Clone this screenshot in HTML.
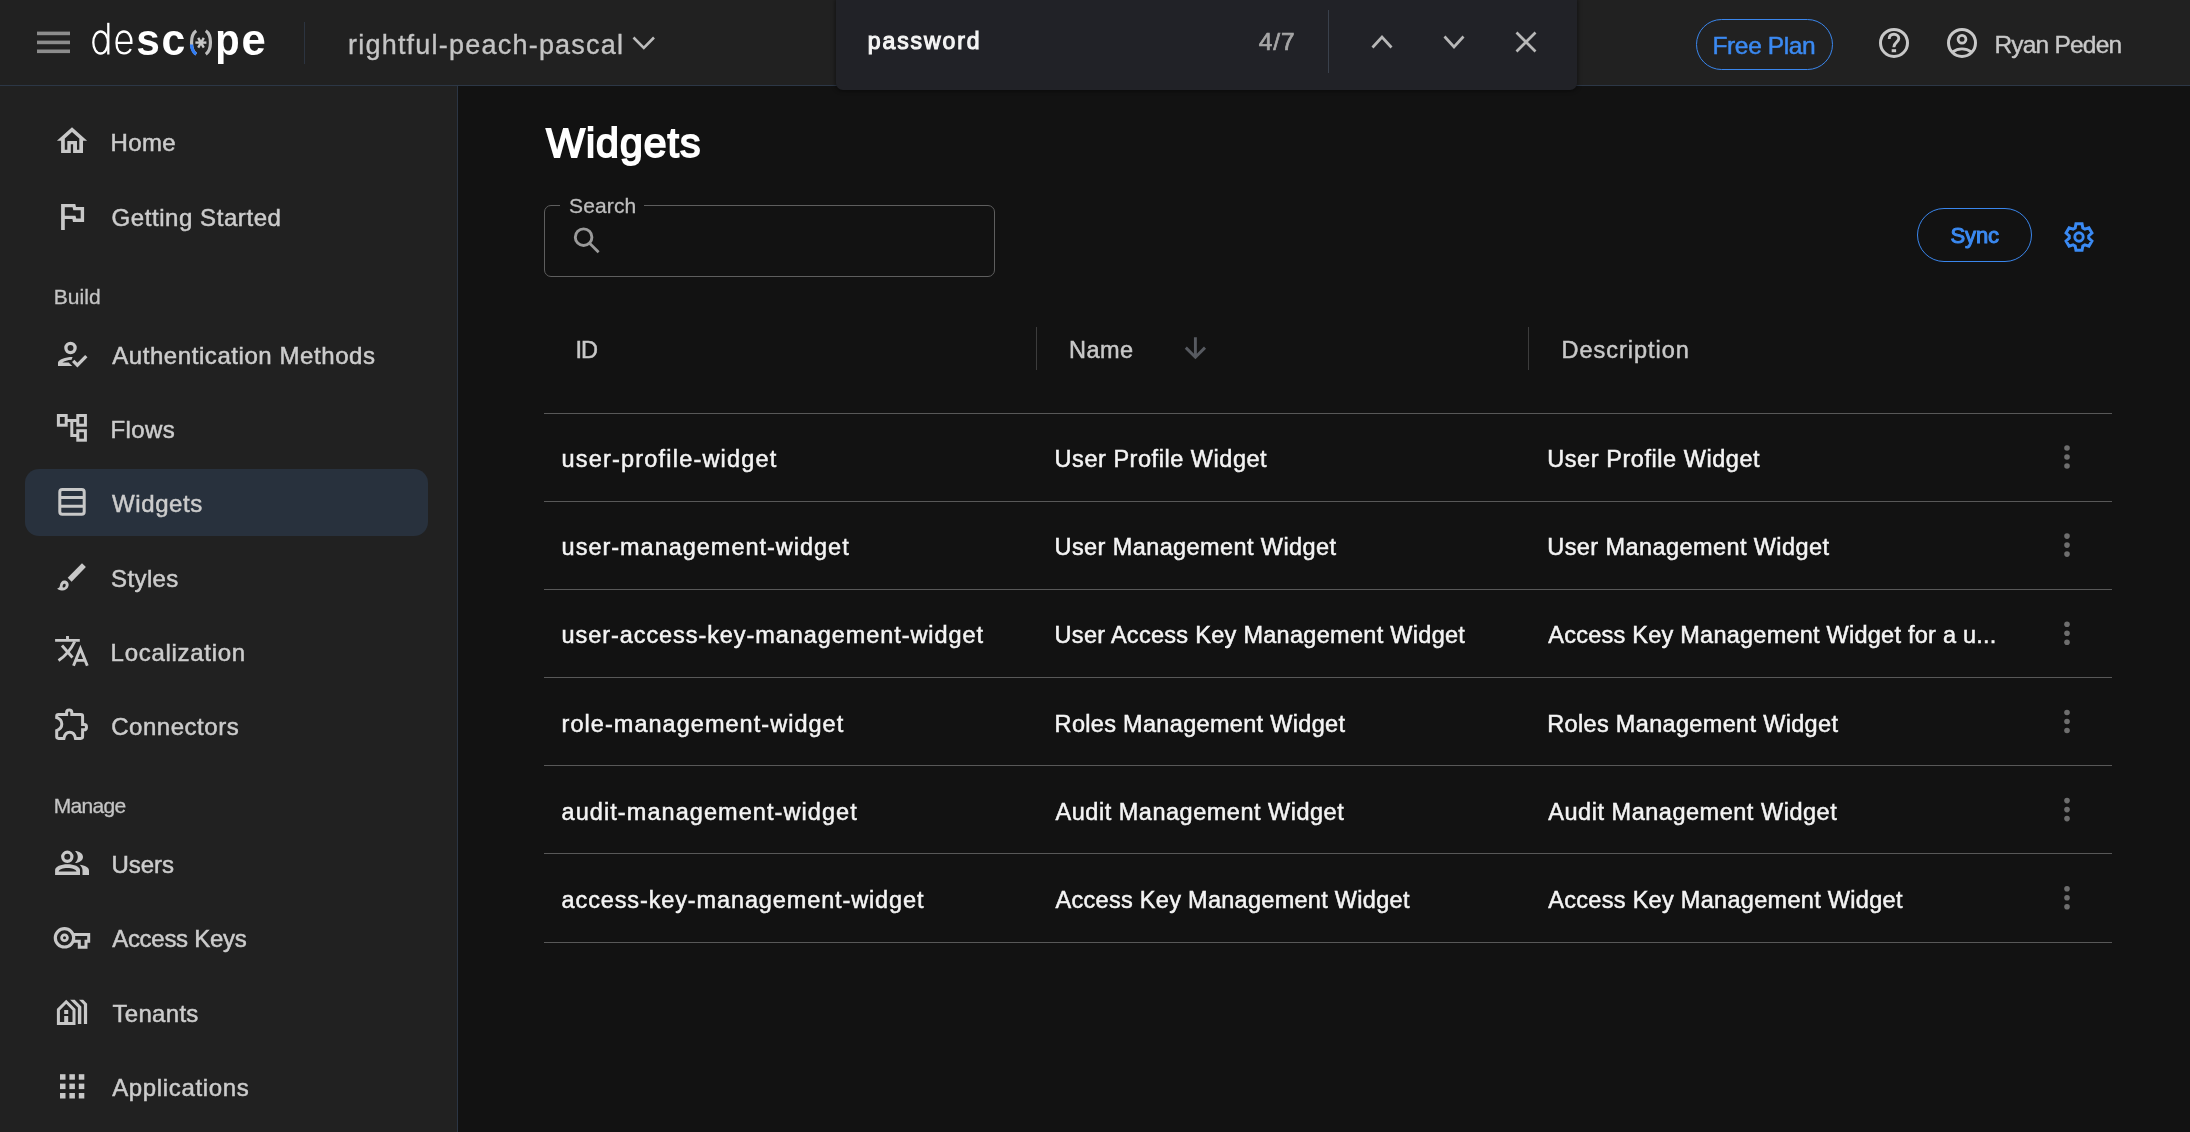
<!DOCTYPE html>
<html><head><meta charset="utf-8"><title>Widgets</title>
<style>
*{box-sizing:border-box;margin:0;padding:0}
html,body{width:2190px;height:1132px;overflow:hidden;background:#121212;font-family:"Liberation Sans",sans-serif}
.abs{position:absolute}
.t{position:absolute;white-space:nowrap;font-family:"Liberation Sans",sans-serif}
#root{position:absolute;left:0;top:0;width:2190px;height:1132px;will-change:transform}
svg{position:absolute;left:0;top:0;overflow:visible}
</style></head><body><div id="root">

<div class="abs" style="left:0;top:0;width:2190px;height:85px;background:#212121"></div>
<div class="abs" style="left:0;top:85px;width:2190px;height:1px;background:#2c3746"></div>
<div class="abs" style="left:0;top:86px;width:457px;height:1046px;background:#212121"></div>
<div class="abs" style="left:457px;top:86px;width:1px;height:1046px;background:#2b3544"></div>
<div class="abs" style="left:25px;top:469px;width:403px;height:67px;background:#28313d;border-radius:14px"></div>
<div class="abs" style="left:304px;top:22px;width:1px;height:42px;background:#2c3440"></div>
<div class="abs" style="left:836px;top:0;width:741px;height:90px;background:#212227;border-radius:0 0 7px 7px;box-shadow:0 0 4px 1px rgba(0,0,0,0.45)"></div>
<div class="abs" style="left:1328px;top:10px;width:1px;height:63px;background:#3a414c"></div>
<div class="abs" style="left:1696px;top:19px;width:137px;height:51px;border:1.5px solid #3a86ec;border-radius:26px"></div>
<div class="abs" style="left:544px;top:205px;width:451px;height:72px;border:1.5px solid #5e5e5e;border-radius:7px"></div>
<div class="abs" style="left:560px;top:200px;width:84px;height:10px;background:#121212"></div>
<div class="abs" style="left:1917px;top:208px;width:115px;height:54px;border:1.5px solid #3a86ec;border-radius:27px"></div>
<div class="abs" style="left:1036px;top:327px;width:1px;height:43px;background:#3c3c3c"></div>
<div class="abs" style="left:1528px;top:327px;width:1px;height:43px;background:#3c3c3c"></div>
<div class="abs" style="left:544px;top:413px;width:1568px;height:1px;background:#585858"></div>
<div class="abs" style="left:544px;top:501px;width:1568px;height:1px;background:#585858"></div>
<div class="abs" style="left:544px;top:589px;width:1568px;height:1px;background:#585858"></div>
<div class="abs" style="left:544px;top:677px;width:1568px;height:1px;background:#585858"></div>
<div class="abs" style="left:544px;top:765px;width:1568px;height:1px;background:#585858"></div>
<div class="abs" style="left:544px;top:853px;width:1568px;height:1px;background:#585858"></div>
<div class="abs" style="left:544px;top:942px;width:1568px;height:1px;background:#585858"></div>
<svg width="2190" height="1132" viewBox="0 0 2190 1132">
<rect x="37" y="31.6" width="33" height="3.6" fill="#8c8c8c"/>
<rect x="37" y="40.6" width="33" height="3.6" fill="#8c8c8c"/>
<rect x="37" y="49.5" width="33" height="3.6" fill="#8c8c8c"/>
<g fill="none" stroke="#ffffff" stroke-width="2.3">
<ellipse cx="100.6" cy="42.5" rx="7.3" ry="11"/>
<line x1="108.3" y1="22.8" x2="108.3" y2="54.5"/>
<path d="M116.5,42.8 H131.4 C131.6,35 127.6,31.5 123.9,31.5 C119.3,31.5 116.5,36 116.5,42.8 C116.5,49.5 119.5,53.4 124,53.4 C127.3,53.4 129.5,51.6 130.8,49"/>
</g>
<g font-family="Liberation Sans" font-weight="700" font-size="44" fill="#ffffff">
<text x="136.2" y="54.5" textLength="23.6" lengthAdjust="spacingAndGlyphs">s</text>
<text x="161.6" y="54.5" textLength="23.8" lengthAdjust="spacingAndGlyphs">c</text>
<text x="215.3" y="54.5" textLength="24.4" lengthAdjust="spacingAndGlyphs">p</text>
<text x="241.5" y="54.5" textLength="24.3" lengthAdjust="spacingAndGlyphs">e</text>
</g>
<path d="M196.2,30.8 C190,35 190,50 196.2,54.2" fill="none" stroke="#bdbdbd" stroke-width="3.2"/>
<path d="M191.4,44.5 C191.7,49.5 193.6,52.5 196.2,54.2" fill="none" stroke="#2f7cf6" stroke-width="3.2"/>
<path d="M205.8,30.8 C212,35 212,50 205.8,54.2" fill="none" stroke="#bdbdbd" stroke-width="3.2"/>
<g stroke="#c8c8c8" stroke-width="2.4"><line x1="195.4" y1="42.6" x2="206.4" y2="42.6"/><line x1="198.2" y1="37.8" x2="203.8" y2="47.6"/><line x1="203.8" y1="37.8" x2="198.2" y2="47.6"/></g>
<path d="M633.5,37.5 L643.8,47.8 L654,37.5" fill="none" stroke="#bdbdbd" stroke-width="2.6"/>
<path d="M1372.5,47.5 L1382,37 L1391.5,47.5" fill="none" stroke="#b8b8b8" stroke-width="2.7"/>
<path d="M1444.5,36.5 L1454,47 L1463.5,36.5" fill="none" stroke="#b8b8b8" stroke-width="2.7"/>
<path d="M1516.5,32.5 L1535.5,51.5 M1535.5,32.5 L1516.5,51.5" fill="none" stroke="#b8b8b8" stroke-width="2.7"/>
<circle cx="1894" cy="42.9" r="13.5" fill="none" stroke="#c8c8c8" stroke-width="3"/>
<path d="M1889.2,39 C1889.2,35.5 1891.5,34.3 1894,34.3 C1896.8,34.3 1898.8,36 1898.8,38.6 C1898.8,42 1893.8,42.5 1893.8,47.3" fill="none" stroke="#c8c8c8" stroke-width="2.9"/>
<rect x="1891.7" y="49.2" width="4.4" height="3" fill="#c8c8c8"/>
<circle cx="1962" cy="42.9" r="13.5" fill="none" stroke="#c8c8c8" stroke-width="3"/>
<circle cx="1962" cy="39.2" r="3.9" fill="none" stroke="#c8c8c8" stroke-width="2.8"/>
<path d="M1952.5,52 C1955.5,49.8 1958.5,48.8 1962,48.8 C1965.5,48.8 1968.5,49.8 1971.5,52" fill="none" stroke="#c8c8c8" stroke-width="2.8"/>
<g fill="#c8c8c8" fill-rule="evenodd">
<path d="M72,127.2 L87.1,140.8 L83,140.8 L83,153 L73.1,153 L73.1,144.2 L70.8,144.2 L70.8,153 L61.1,153 L61.1,140.8 L56.9,140.8 Z M72,132 L79.3,138.6 L79.3,149.7 L77,149.7 L77,141 L67.3,141 L67.3,149.7 L64.8,149.7 L64.8,138.6 Z"/>
<path d="M61.1,203.9 L75.3,203.9 L76,206.9 L84.1,206.9 L84.1,222.1 L73,222.1 L72.4,219.1 L64.8,219.1 L64.8,229.9 L61.1,229.9 Z M64.8,207.2 L72.6,207.2 L73.3,210.2 L80.7,210.2 L80.7,218.5 L76.2,218.5 L75.5,215.7 L64.8,215.7 Z"/>
</g>
<circle cx="70.5" cy="348" r="4.6" fill="none" stroke="#c8c8c8" stroke-width="3.3"/>
<path d="M58,366 L72.3,366 L68.6,362.5 L62.3,362.5 C64.5,361 67.5,360 71.6,359.7 L72.6,357 C65,357 58.4,359.5 58,362.6 Z" fill="#c8c8c8"/>
<path d="M73.2,360.8 L77.4,365.2 L86.3,356.2" fill="none" stroke="#c8c8c8" stroke-width="3.3"/>
<g fill="none" stroke="#c8c8c8" stroke-width="3">
<rect x="58.4" y="415.5" width="7.8" height="9.7"/>
<rect x="77.8" y="415.5" width="7.6" height="9.7"/>
<rect x="77.8" y="430.7" width="7.6" height="9.5"/>
<path d="M66.2,420.5 H77.8 M71.8,420.5 V435.4 H77.8"/>
</g>
<rect x="59.8" y="489.6" width="24.4" height="24.6" rx="2.5" fill="none" stroke="#c8c8c8" stroke-width="3"/>
<path d="M59.8,497.5 H84.2 M59.8,506.3 H84.2" stroke="#c8c8c8" stroke-width="3"/>
<path d="M67.7,577.8 L82,563.2 L85.9,567.1 L71.6,581.7 Z" fill="#c8c8c8"/>
<path d="M64.3,580.5 C67.5,580.5 69.2,583 68.5,586 C67.7,589.3 64.6,590.6 61.8,590.4 C59.5,590.2 57.8,589.3 57.2,588.4 C59.2,588 59.6,587.3 59.9,585.5 C60.3,582.5 62,580.5 64.3,580.5 Z M64.5,583.8 C63.3,583.8 62.6,585.2 62.6,586.4 C62.6,587.3 63.2,587.7 63.9,587.6 C65,587.5 65.7,586.2 65.7,585.1 C65.7,584.3 65.2,583.8 64.5,583.8 Z" fill="#c8c8c8" fill-rule="evenodd"/>
<g fill="none" stroke="#c8c8c8" stroke-width="2.9">
<path d="M55.1,640.4 H79.8 M67.5,636 V640.4"/>
<path d="M74.7,641.5 C71.5,648.5 66,655.5 58.5,660.5"/>
<path d="M62,645.5 L72.5,657.5"/>
<path d="M73.5,665.8 L80.4,648.6 L87.3,665.8 M76,660.4 H85"/>
</g>
<path d="M58.5,714.6 H66.6 V712.3 C66.6,709.2 71.8,709.2 71.8,712.3 V714.6 H80.8 C81.8,714.6 82.6,715.4 82.6,716.4 V724.5 H84.3 C87.2,724.5 87.2,729.8 84.3,729.8 H82.6 V736.6 C82.6,737.6 81.8,738.4 80.8,738.4 H75.5 C74.8,734.6 73.2,732.3 69.8,732.3 C66.4,732.3 64.6,734.6 63.9,738.4 H58.5 C57.5,738.4 56.7,737.6 56.7,736.6 V730.6 C60,729.3 61.8,727 61.8,724 C61.8,721 60,718.8 56.7,717.6 V716.4 C56.7,715.4 57.5,714.6 58.5,714.6 Z" fill="none" stroke="#c8c8c8" stroke-width="3"/>
<circle cx="67.3" cy="856.8" r="4.6" fill="none" stroke="#c8c8c8" stroke-width="3.2"/>
<path d="M75,851 C79,851 83,853.5 83,857 C83,860.5 79,863 75,863 C77,861 77.8,859 77.8,857 C77.8,855 77,853 75,851 Z" fill="#c8c8c8"/>
<path d="M55.1,875 V870 C55.1,866.5 61,864.2 67.5,864.2 C74,864.2 80,866.5 80,870 V875 Z M58.6,871.5 H76.5 C76,869.5 72,868 67.5,868 C63,868 59,869.5 58.6,871.5 Z" fill="#c8c8c8" fill-rule="evenodd"/>
<path d="M79.6,864.7 C85,865.2 89,867.3 89,870.5 V875 H82.5 V870.3 C82.5,868.3 81.5,866.3 79.6,864.7 Z" fill="#c8c8c8"/>
<circle cx="64.5" cy="937.8" r="9.2" fill="none" stroke="#c8c8c8" stroke-width="3.2"/>
<circle cx="64.5" cy="937.8" r="2.9" fill="none" stroke="#c8c8c8" stroke-width="2.8"/>
<path d="M73.5,934.6 H88.7 V941.3 H86 V947.2 H79.3 V941.3 H73.5" fill="none" stroke="#c8c8c8" stroke-width="3"/>
<path d="M82.6,941.3 V945" stroke="#212121" stroke-width="2"/>
<path d="M58.4,1023.6 V1009.6 L66.2,1001.8 L74,1009.6 V1023.6 Z" fill="none" stroke="#c8c8c8" stroke-width="3"/>
<rect x="64.2" y="1010" width="4" height="4" fill="#c8c8c8"/>
<rect x="64.2" y="1016" width="4" height="7" fill="#c8c8c8"/>
<path d="M70.1,999.8 L74.7,999.8 L81.3,1006.4 L81.3,1024.1 L77.9,1024.1 L77.9,1007.6 Z M79,999.8 L83.2,999.8 L87.1,1003.7 L87.1,1024.1 L83.9,1024.1 L83.9,1004.7 Z" fill="#c8c8c8"/>
<rect x="60.0" y="1074.2" width="5.5" height="5.5" fill="#c8c8c8"/>
<rect x="69.4" y="1074.2" width="5.5" height="5.5" fill="#c8c8c8"/>
<rect x="78.8" y="1074.2" width="5.5" height="5.5" fill="#c8c8c8"/>
<rect x="60.0" y="1083.6" width="5.5" height="5.5" fill="#c8c8c8"/>
<rect x="69.4" y="1083.6" width="5.5" height="5.5" fill="#c8c8c8"/>
<rect x="78.8" y="1083.6" width="5.5" height="5.5" fill="#c8c8c8"/>
<rect x="60.0" y="1093.0" width="5.5" height="5.5" fill="#c8c8c8"/>
<rect x="69.4" y="1093.0" width="5.5" height="5.5" fill="#c8c8c8"/>
<rect x="78.8" y="1093.0" width="5.5" height="5.5" fill="#c8c8c8"/>
<circle cx="583.6" cy="237.2" r="8.3" fill="none" stroke="#9a9a9a" stroke-width="2.9"/>
<path d="M589.8,243.4 L598.6,252.2" stroke="#9a9a9a" stroke-width="2.8"/>
<path d="M1195.4,337.3 V357 M1185.8,347.6 L1195.4,357.2 L1205,347.6" fill="none" stroke="#575a60" stroke-width="2.9"/>
<path d="M2082.83,227.98 L2082.04,223.85 L2075.96,223.85 L2075.17,227.98 L2073.10,229.17 L2069.13,227.79 L2066.09,233.05 L2069.27,235.81 L2069.27,238.19 L2066.09,240.95 L2069.13,246.21 L2073.10,244.83 L2075.17,246.02 L2075.96,250.15 L2082.04,250.15 L2082.83,246.02 L2084.90,244.83 L2088.87,246.21 L2091.91,240.95 L2088.73,238.19 L2088.73,235.81 L2091.91,233.05 L2088.87,227.79 L2084.90,229.17 Z" fill="none" stroke="#3a8af4" stroke-width="3" stroke-linejoin="miter"/>
<circle cx="2079" cy="237" r="4.2" fill="none" stroke="#3a8af4" stroke-width="2.9"/>
<circle cx="2067" cy="448.0" r="2.8" fill="#6e6e6e"/>
<circle cx="2067" cy="457.0" r="2.8" fill="#6e6e6e"/>
<circle cx="2067" cy="466.0" r="2.8" fill="#6e6e6e"/>
<circle cx="2067" cy="536.1" r="2.8" fill="#6e6e6e"/>
<circle cx="2067" cy="545.1" r="2.8" fill="#6e6e6e"/>
<circle cx="2067" cy="554.1" r="2.8" fill="#6e6e6e"/>
<circle cx="2067" cy="624.3" r="2.8" fill="#6e6e6e"/>
<circle cx="2067" cy="633.3" r="2.8" fill="#6e6e6e"/>
<circle cx="2067" cy="642.3" r="2.8" fill="#6e6e6e"/>
<circle cx="2067" cy="712.5" r="2.8" fill="#6e6e6e"/>
<circle cx="2067" cy="721.5" r="2.8" fill="#6e6e6e"/>
<circle cx="2067" cy="730.5" r="2.8" fill="#6e6e6e"/>
<circle cx="2067" cy="800.6" r="2.8" fill="#6e6e6e"/>
<circle cx="2067" cy="809.6" r="2.8" fill="#6e6e6e"/>
<circle cx="2067" cy="818.6" r="2.8" fill="#6e6e6e"/>
<circle cx="2067" cy="888.8" r="2.8" fill="#6e6e6e"/>
<circle cx="2067" cy="897.8" r="2.8" fill="#6e6e6e"/>
<circle cx="2067" cy="906.8" r="2.8" fill="#6e6e6e"/>
</svg>
<div class="t" style="left:348.0px;top:31.7px;font-size:27px;line-height:27px;font-weight:400;color:#c4c4c4;letter-spacing:1.22px;-webkit-text-stroke:0.35px #c4c4c4;">rightful-peach-pascal</div>
<div class="t" style="left:867.7px;top:29.9px;font-size:23px;line-height:23px;font-weight:400;color:#f4f4f4;letter-spacing:1.929px;-webkit-text-stroke:1.1px #f4f4f4;">password</div>
<div class="t" style="left:1258.7px;top:30.0px;font-size:24.5px;line-height:24.5px;font-weight:400;color:#a6a6a6;letter-spacing:1.0px;-webkit-text-stroke:0.7px #a6a6a6;">4/7</div>
<div class="t" style="left:1712.5px;top:34.1px;font-size:24.5px;line-height:24.5px;font-weight:400;color:#3b8af2;letter-spacing:-0.375px;-webkit-text-stroke:0.5px #3b8af2;">Free Plan</div>
<div class="t" style="left:1994.4px;top:33.2px;font-size:24.5px;line-height:24.5px;font-weight:400;color:#c8c8c8;letter-spacing:-0.789px;-webkit-text-stroke:0.4px #c8c8c8;">Ryan Peden</div>
<div class="t" style="left:110.5px;top:130.8px;font-size:24px;line-height:24px;font-weight:400;color:#cccccc;letter-spacing:0.4px;-webkit-text-stroke:0.5px #cccccc;">Home</div>
<div class="t" style="left:111.5px;top:205.8px;font-size:24px;line-height:24px;font-weight:400;color:#cccccc;letter-spacing:0.571px;-webkit-text-stroke:0.5px #cccccc;">Getting Started</div>
<div class="t" style="left:53.7px;top:286.2px;font-size:21px;line-height:21px;font-weight:400;color:#c4c4c4;letter-spacing:0.075px;-webkit-text-stroke:0.3px #c4c4c4;">Build</div>
<div class="t" style="left:112.2px;top:344.2px;font-size:24px;line-height:24px;font-weight:400;color:#cccccc;letter-spacing:0.571px;-webkit-text-stroke:0.5px #cccccc;">Authentication Methods</div>
<div class="t" style="left:110.5px;top:417.5px;font-size:24px;line-height:24px;font-weight:400;color:#cccccc;letter-spacing:0.425px;-webkit-text-stroke:0.5px #cccccc;">Flows</div>
<div class="t" style="left:112.0px;top:492.0px;font-size:24px;line-height:24px;font-weight:400;color:#cccccc;letter-spacing:0.6px;-webkit-text-stroke:0.5px #cccccc;">Widgets</div>
<div class="t" style="left:111.0px;top:567.0px;font-size:24px;line-height:24px;font-weight:400;color:#cccccc;letter-spacing:0.4px;-webkit-text-stroke:0.5px #cccccc;">Styles</div>
<div class="t" style="left:110.6px;top:641.0px;font-size:24px;line-height:24px;font-weight:400;color:#cccccc;letter-spacing:0.709px;-webkit-text-stroke:0.5px #cccccc;">Localization</div>
<div class="t" style="left:111.2px;top:715.0px;font-size:24px;line-height:24px;font-weight:400;color:#cccccc;letter-spacing:0.533px;-webkit-text-stroke:0.5px #cccccc;">Connectors</div>
<div class="t" style="left:53.7px;top:795.3px;font-size:21px;line-height:21px;font-weight:400;color:#c4c4c4;letter-spacing:-0.68px;-webkit-text-stroke:0.3px #c4c4c4;">Manage</div>
<div class="t" style="left:111.5px;top:852.5px;font-size:24px;line-height:24px;font-weight:400;color:#cccccc;letter-spacing:-0.05px;-webkit-text-stroke:0.5px #cccccc;">Users</div>
<div class="t" style="left:112.2px;top:927.2px;font-size:24px;line-height:24px;font-weight:400;color:#cccccc;letter-spacing:-0.29px;-webkit-text-stroke:0.5px #cccccc;">Access Keys</div>
<div class="t" style="left:112.5px;top:1002.2px;font-size:24px;line-height:24px;font-weight:400;color:#cccccc;letter-spacing:0.3px;-webkit-text-stroke:0.5px #cccccc;">Tenants</div>
<div class="t" style="left:112.2px;top:1075.8px;font-size:24px;line-height:24px;font-weight:400;color:#cccccc;letter-spacing:0.645px;-webkit-text-stroke:0.5px #cccccc;">Applications</div>
<div class="t" style="left:546.3px;top:123.3px;font-size:41px;line-height:41px;font-weight:400;color:#ffffff;letter-spacing:1.0px;-webkit-text-stroke:1.8px #ffffff;">Widgets</div>
<div class="t" style="left:569.0px;top:195.0px;font-size:21px;line-height:21px;font-weight:400;color:#bdbdbd;letter-spacing:0.14px;-webkit-text-stroke:0.3px #bdbdbd;">Search</div>
<div class="t" style="left:575.5px;top:339.3px;font-size:23.5px;line-height:23.5px;font-weight:400;color:#c8c8c8;letter-spacing:-1.0px;-webkit-text-stroke:0.5px #c8c8c8;">ID</div>
<div class="t" style="left:1069.0px;top:339.3px;font-size:23.5px;line-height:23.5px;font-weight:400;color:#c8c8c8;letter-spacing:0.5px;-webkit-text-stroke:0.5px #c8c8c8;">Name</div>
<div class="t" style="left:1561.5px;top:339.3px;font-size:23.5px;line-height:23.5px;font-weight:400;color:#c8c8c8;letter-spacing:0.98px;-webkit-text-stroke:0.5px #c8c8c8;">Description</div>
<div class="t" style="left:1950.5px;top:224.9px;font-size:22px;line-height:22px;font-weight:400;color:#3b8af2;letter-spacing:-0.1px;-webkit-text-stroke:1.0px #3b8af2;">Sync</div>
<div class="t" style="left:561.6px;top:448.1px;font-size:23.5px;line-height:23.5px;font-weight:400;color:#f4f4f4;letter-spacing:1.189px;-webkit-text-stroke:0.5px #f4f4f4;">user-profile-widget</div>
<div class="t" style="left:1054.6px;top:448.1px;font-size:23.5px;line-height:23.5px;font-weight:400;color:#f4f4f4;letter-spacing:0.533px;-webkit-text-stroke:0.5px #f4f4f4;">User Profile Widget</div>
<div class="t" style="left:1547.3px;top:448.1px;font-size:23.5px;line-height:23.5px;font-weight:400;color:#f4f4f4;letter-spacing:0.55px;-webkit-text-stroke:0.5px #f4f4f4;">User Profile Widget</div>
<div class="t" style="left:561.6px;top:536.2px;font-size:23.5px;line-height:23.5px;font-weight:400;color:#f4f4f4;letter-spacing:0.981px;-webkit-text-stroke:0.5px #f4f4f4;">user-management-widget</div>
<div class="t" style="left:1054.6px;top:536.2px;font-size:23.5px;line-height:23.5px;font-weight:400;color:#f4f4f4;letter-spacing:0.4px;-webkit-text-stroke:0.5px #f4f4f4;">User Management Widget</div>
<div class="t" style="left:1547.3px;top:536.2px;font-size:23.5px;line-height:23.5px;font-weight:400;color:#f4f4f4;letter-spacing:0.414px;-webkit-text-stroke:0.5px #f4f4f4;">User Management Widget</div>
<div class="t" style="left:561.6px;top:624.4px;font-size:23.5px;line-height:23.5px;font-weight:400;color:#f4f4f4;letter-spacing:0.925px;-webkit-text-stroke:0.5px #f4f4f4;">user-access-key-management-widget</div>
<div class="t" style="left:1054.6px;top:624.4px;font-size:23.5px;line-height:23.5px;font-weight:400;color:#f4f4f4;letter-spacing:0.291px;-webkit-text-stroke:0.5px #f4f4f4;">User Access Key Management Widget</div>
<div class="t" style="left:1548.3px;top:624.4px;font-size:23.5px;line-height:23.5px;font-weight:400;color:#f4f4f4;letter-spacing:0.242px;-webkit-text-stroke:0.5px #f4f4f4;">Access Key Management Widget for a u...</div>
<div class="t" style="left:561.6px;top:712.6px;font-size:23.5px;line-height:23.5px;font-weight:400;color:#f4f4f4;letter-spacing:1.033px;-webkit-text-stroke:0.5px #f4f4f4;">role-management-widget</div>
<div class="t" style="left:1054.6px;top:712.6px;font-size:23.5px;line-height:23.5px;font-weight:400;color:#f4f4f4;letter-spacing:0.314px;-webkit-text-stroke:0.5px #f4f4f4;">Roles Management Widget</div>
<div class="t" style="left:1547.3px;top:712.6px;font-size:23.5px;line-height:23.5px;font-weight:400;color:#f4f4f4;letter-spacing:0.327px;-webkit-text-stroke:0.5px #f4f4f4;">Roles Management Widget</div>
<div class="t" style="left:561.6px;top:800.7px;font-size:23.5px;line-height:23.5px;font-weight:400;color:#f4f4f4;letter-spacing:1.064px;-webkit-text-stroke:0.5px #f4f4f4;">audit-management-widget</div>
<div class="t" style="left:1055.6px;top:800.7px;font-size:23.5px;line-height:23.5px;font-weight:400;color:#f4f4f4;letter-spacing:0.509px;-webkit-text-stroke:0.5px #f4f4f4;">Audit Management Widget</div>
<div class="t" style="left:1548.3px;top:800.7px;font-size:23.5px;line-height:23.5px;font-weight:400;color:#f4f4f4;letter-spacing:0.523px;-webkit-text-stroke:0.5px #f4f4f4;">Audit Management Widget</div>
<div class="t" style="left:561.6px;top:888.9px;font-size:23.5px;line-height:23.5px;font-weight:400;color:#f4f4f4;letter-spacing:0.874px;-webkit-text-stroke:0.5px #f4f4f4;">access-key-management-widget</div>
<div class="t" style="left:1055.6px;top:888.9px;font-size:23.5px;line-height:23.5px;font-weight:400;color:#f4f4f4;letter-spacing:0.285px;-webkit-text-stroke:0.5px #f4f4f4;">Access Key Management Widget</div>
<div class="t" style="left:1548.3px;top:888.9px;font-size:23.5px;line-height:23.5px;font-weight:400;color:#f4f4f4;letter-spacing:0.296px;-webkit-text-stroke:0.5px #f4f4f4;">Access Key Management Widget</div>
</div></body></html>
